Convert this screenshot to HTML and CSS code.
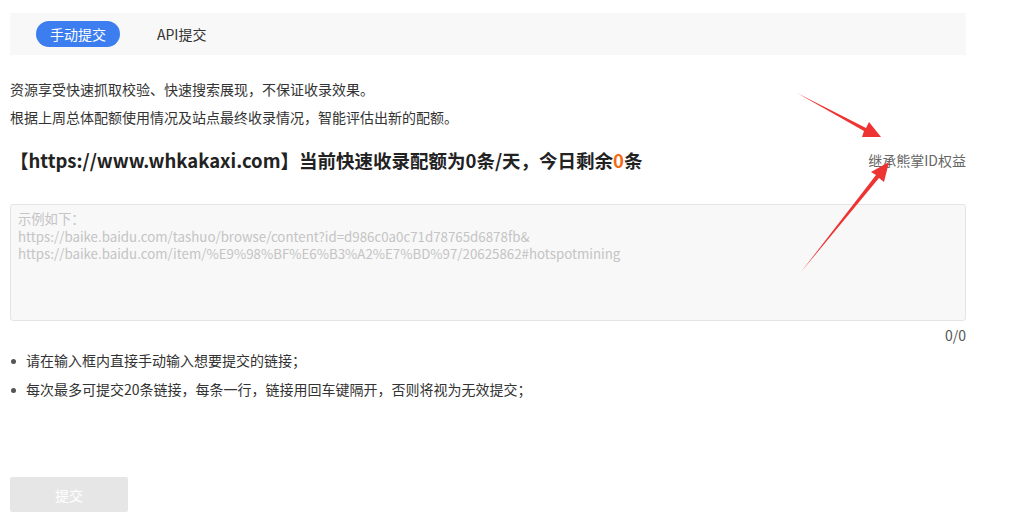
FILE: index.html
```html
<!DOCTYPE html>
<html lang="zh-CN">
<head>
<meta charset="utf-8">
<title>快速收录</title>
<link rel="stylesheet" href="styles.css">
</head>
<body>
<div class="page">
  <div class="tabs">
    <span class="tab active">手动提交</span>
    <span class="tab">API提交</span>
  </div>

  <p class="desc first">资源享受快速抓取校验、快速搜索展现，不保证收录效果。</p>
  <p class="desc">根据上周总体配额使用情况及站点最终收录情况，智能评估出新的配额。</p>

  <div class="quota">
    <h2 class="quota-title">【https://www.whkakaxi.com】当前快速收录配额为0条/天，今日剩余<span class="num">0</span>条</h2>
    <a class="inherit" href="#">继承熊掌ID权益</a>
  </div>

  <textarea class="urls" placeholder="示例如下：
https://baike.baidu.com/tashuo/browse/content?id=d986c0a0c71d78765d6878fb&amp;
https://baike.baidu.com/item/%E9%98%BF%E6%B3%A2%E7%BD%97/20625862#hotspotmining"></textarea>
  <div class="count">0/0</div>

  <ul class="tips">
    <li>请在输入框内直接手动输入想要提交的链接；</li>
    <li>每次最多可提交20条链接，每条一行，链接用回车键隔开，否则将视为无效提交；</li>
  </ul>

  <button class="submit" type="button" disabled>提交</button>

  <svg class="arrows" width="1020" height="529" viewBox="0 0 1020 529">
    <!-- upper arrow, pointing down-right at the link -->
    <polygon points="797,93 866,128 869,122 881,137 862,137 864,131" fill="#ee3333"/>
    <!-- lower arrow, pointing up-right at the link -->
    <polygon points="801,272 876,175 871,172 889,162 884,182 879,178" fill="#ee3333"/>
  </svg>
</div>
</body>
</html>
```

FILE: styles.css
```css
* { box-sizing: border-box; }

html, body {
  margin: 0;
  padding: 0;
  background: #fff;
}

body {
  font-family: "Noto Sans CJK SC", "Microsoft YaHei", "Noto Sans", sans-serif;
  color: #333;
  font-size: 14px;
}

.page {
  position: relative;
  width: 1020px;
  height: 529px;
  padding: 13px 54px 0 10px;
}

.tabs {
  display: flex;
  align-items: center;
  height: 42px;
  background: #f8f8f8;
  padding-left: 26px;
  gap: 37px;
}

.tab {
  font-size: 14px;
  color: #333;
  line-height: 26px;
}

.tab.active {
  background: #3c7ef0;
  color: #fff;
  border-radius: 13px;
  width: 84px;
  text-align: center;
}

.desc {
  margin: 0;
  font-size: 14px;
  line-height: 28px;
  color: #333;
}

.desc.first { margin-top: 20px; }

.quota {
  display: flex;
  align-items: center;
  justify-content: space-between;
  margin-top: 14px;
  height: 30px;
}

.quota-title {
  margin: 0;
  font-size: 18.5px;
  font-weight: bold;
  color: #222;
  line-height: 30px;
}

.quota-title .num { color: #f26b10; }

.inherit {
  font-size: 14px;
  color: #666;
  text-decoration: none;
  line-height: 30px;
}

.urls {
  display: block;
  width: 956px;
  height: 117px;
  margin-top: 29px;
  padding: 5px 7px;
  background: #f8f8f8;
  border: 1px solid #e4e4e4;
  border-radius: 3px;
  resize: none;
  font-family: "Noto Sans CJK SC", "Microsoft YaHei", sans-serif;
  font-size: 13.3px;
  line-height: 17.5px;
  color: #333;
}

.urls::placeholder { color: #c4c4c4; }

.count {
  text-align: right;
  font-size: 14px;
  color: #555;
  margin-top: 5px;
  line-height: 18px;
}

.tips {
  margin: 2px 0 0;
  padding: 0 0 0 16px;
  list-style: none;
}

.tips li {
  position: relative;
  font-size: 14px;
  line-height: 29px;
  color: #333;
}

.tips li::before {
  content: "";
  position: absolute;
  left: -15px;
  top: 13px;
  width: 5px;
  height: 5px;
  border-radius: 50%;
  background: #555;
}

.submit {
  display: block;
  margin-top: 73px;
  width: 118px;
  height: 35px;
  background: #e6e6e6;
  border: none;
  border-radius: 2px;
  color: #fff;
  font-family: "Noto Sans CJK SC", sans-serif;
  font-size: 14px;
}

.arrows {
  position: absolute;
  left: 0;
  top: 0;
  pointer-events: none;
}
```
